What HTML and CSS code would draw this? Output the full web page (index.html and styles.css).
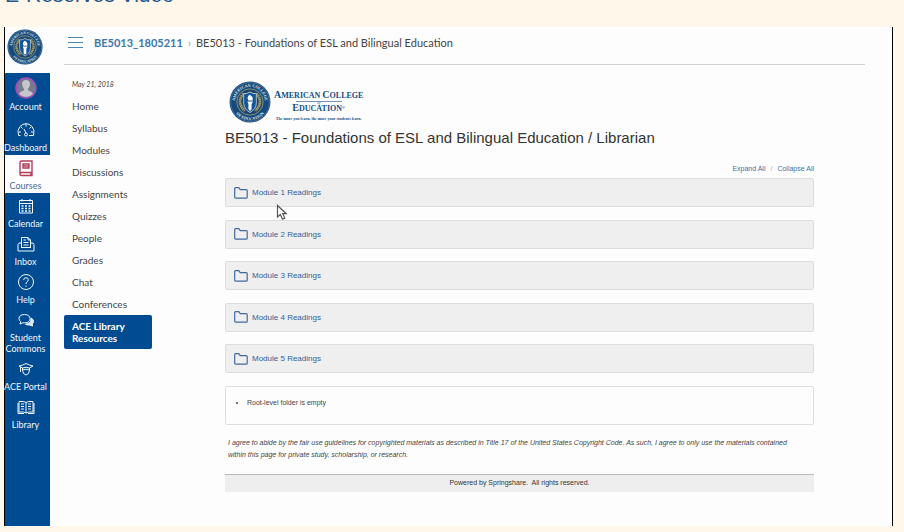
FILE: index.html
```html
<!DOCTYPE html>
<html lang="en">
<head>
<meta charset="utf-8">
<title>E-Reserves Video</title>
<link rel="stylesheet" href="styles.css">
</head>
<body>
<svg class="defs" aria-hidden="true">
  <symbol id="seal" viewBox="0 0 80 80">
    <circle cx="40" cy="40" r="39" fill="#174a7c"/>
    <circle cx="40" cy="40" r="37" fill="none" stroke="#6d8fae" stroke-width="1"/>
    <circle cx="40" cy="40" r="25" fill="#20456a" stroke="#9aa98a" stroke-width="1.5"/>
    <path id="arc-top" d="M12 45A28.500 28.500 0 1 1 68 45" fill="none"/>
    <path id="arc-bottom" d="M6 46A34.500 34.500 0 0 0 74 46" fill="none"/>
    <text class="seal-text"><textPath href="#arc-top" startOffset="50%">AMERICAN COLLEGE</textPath></text>
    <text class="seal-text"><textPath href="#arc-bottom" startOffset="50%">OF EDUCATION</textPath></text>
    <path d="M28 24Q13 40 30 57M52 24Q67 40 50 57" fill="none" stroke="#a6a067" stroke-width="5" stroke-dasharray="3 1"/>
    <path d="M28 24Q34 25 40 21Q46 25 52 24V43Q51 54 40 60Q29 54 28 43Z" fill="#0d559c" stroke="#d7dfd9" stroke-width="1.500"/>
    <path d="M39 26Q47 29 45 37H37Q33 31 39 26ZM35 39H46L43 44V54L40 57L37 54V44Z" fill="#fff"/>
  </symbol>
  <symbol id="folder" viewBox="0 0 14 12">
    <path d="M.7 10V1.500Q.7.700 1.500.700H4.800L6.200 2.700H12.300Q13.200 2.700 13.200 3.600V10.200Q13.200 11.200 12.200 11.200H1.800Q.7 11.200.7 10Z" fill="none" stroke="#416a9d" stroke-width="1.200"/>
  </symbol>
</svg>

<h1 class="page-title">E-Reserves Video</h1>

<main class="frame">
  <nav class="rail" aria-label="Global">
    <a class="rail-logo" href="#" aria-label="American College of Education"><svg><use href="#seal"/></svg></a>
    <a class="rail-item account" href="#">
      <svg viewBox="0 0 22 22"><circle cx="11" cy="11" r="10" fill="#737b8c" stroke="#a94bbd" stroke-width="1.500"/><path d="M4 17Q5 14 9 13.500V12Q6.500 9 7 6Q8 3 11 3T15 6Q15.500 9 13 12V13.500Q17 14 18 17Q15 20 11 20T4 17Z" fill="#c6c5c9" stroke="none"/></svg>
      <span>Account</span></a>
    <a class="rail-item" href="#">
      <svg viewBox="0 0 18 18"><path d="M3.500 14.500H1.500Q-.2 9 3 5.500Q6 2.500 9 2.700Q12 2.500 15 5.500Q18.200 9 16.500 14.500H12M9 3V5.500M4 6L5.500 7.500M14 6L12.500 7.500M2 11H4M14 11H16M7 8L9 12"/><circle cx="9" cy="13.500" r="1.500"/></svg>
      <span>Dashboard</span></a>
    <a class="rail-item current" href="#" aria-current="page">
      <svg viewBox="0 0 18 18"><path d="M15 13.500H4.500Q3 13.500 3 15T4.500 16.500H15V2H4.500Q3 2 3 3.500V15M6 5H12V9H6ZM6 7H12M14 14V16" stroke-width="1.400"/></svg>
      <span>Courses</span></a>
    <a class="rail-item" href="#">
      <svg viewBox="0 0 18 18"><path d="M2.500 3.500H15.500V16H2.500ZM2.500 6.500H15.500M5 2V4.500M13 2V4.500"/><path d="M4.500 9H13.500M4.500 11.500H13.500M4.500 14H13.500" stroke-width="1.600" stroke-dasharray="2 1.500"/></svg>
      <span>Calendar</span></a>
    <a class="rail-item" href="#">
      <svg viewBox="0 0 18 18"><path d="M4.500 12.500V2.500H11L13.500 5V12.500M11 2.500V5H13.500M6.500 5H9M6.500 7.500H11.500M6.500 10H11.500M4.500 8H2L1 9.500V16H17V9.500L16 8H13.500M4 12.500H14"/></svg>
      <span>Inbox</span></a>
    <a class="rail-item" href="#">
      <svg viewBox="0 0 18 18"><circle cx="9" cy="9" r="7.500"/><path d="M6.700 7Q6.700 4.700 9 4.700T11.300 6.800Q11.300 8 9.800 9Q9 9.600 9 11M9 12.500V13.700"/></svg>
      <span>Help</span></a>
    <a class="rail-item" href="#">
      <svg viewBox="0 0 18 18"><path d="M7.500 3.500C3.800 3.500 2 5.300 2 7.700Q2 9.500 3.700 10.700L3 13L6 11.800C10.500 12.300 13 10.300 13 7.700S11 3.500 7.500 3.500Z"/><path d="M14 7Q16.500 8 16.500 10.500Q16.500 12 15 13L15.700 15L12.700 14Q10 14.200 8.500 13.200Q13.500 12.500 14 9Z" fill="#d8e6f2"/></svg>
      <span>Student Commons</span></a>
    <a class="rail-item" href="#">
      <svg viewBox="0 0 18 18"><path d="M2 6Q5 5.500 9 3.500Q13 5.500 16 6L12.500 8Q9 6.500 5.500 8ZM5.500 8V10.500Q6 14.500 9 15Q12 14.500 12.500 10.500V8M5.500 10Q9 8.500 12.500 10M3.500 7V12"/></svg>
      <span>ACE Portal</span></a>
    <a class="rail-item" href="#">
      <svg viewBox="0 0 18 18"><path d="M9 4.500Q7 3 2 3.500V14Q7 13.500 9 15Q11 13.500 16 14V3.500Q11 3 9 4.500ZM9 4.500V15M4 6H7M4 8.500H7M4 11H7M11 6H14M11 8.500H14M11 11H14M1 5V15.500H7M17 5V15.500H11"/></svg>
      <span>Library</span></a>
  </nav>

  <div class="app">
    <header class="crumbs">
      <button class="menu" type="button" aria-label="Toggle course menu"><i></i><i></i><i></i></button>
      <a class="crumb-link" href="#">BE5013_1805211</a>
      <span class="crumb-sep">›</span>
      <span>BE5013 - Foundations of ESL and Bilingual Education</span>
    </header>

    <div class="columns">
      <nav class="course-nav" aria-label="Course">
        <p class="term">May 21, 2018</p>
        <a href="#">Home</a>
        <a href="#">Syllabus</a>
        <a href="#">Modules</a>
        <a href="#">Discussions</a>
        <a href="#">Assignments</a>
        <a href="#">Quizzes</a>
        <a href="#">People</a>
        <a href="#">Grades</a>
        <a href="#">Chat</a>
        <a href="#">Conferences</a>
        <a class="active" href="#" aria-current="page">ACE Library Resources</a>
      </nav>

      <section class="content">
        <div class="brand">
          <svg class="brand-seal" aria-hidden="true"><use href="#seal"/></svg>
          <div class="brand-words">
            <span class="brand-line"><b>A</b>MERICAN <b>C</b>OLLEGE</span>
            <span class="brand-of">of</span>
            <span class="brand-line"><b>E</b>DUCATION<small>®</small></span>
            <span class="brand-motto">The more you learn, the more your students learn.</span>
          </div>
        </div>
        <h2>BE5013 - Foundations of ESL and Bilingual Education / Librarian</h2>
        <div class="toggles"><a href="#">Expand All</a><span>/</span><a href="#">Collapse All</a></div>
        <div class="modules">
          <a class="module" href="#"><svg><use href="#folder"/></svg>Module 1 Readings
            <svg class="pointer" viewBox="0 0 12 17"><path d="M1.500 1.500V13L4.300 10.500L6.500 15.200L8.800 14.100L6.700 9.700H10.200Z" fill="#fff" stroke="#555" stroke-width="1.200"/></svg></a>
          <a class="module" href="#"><svg><use href="#folder"/></svg>Module 2 Readings</a>
          <a class="module" href="#"><svg><use href="#folder"/></svg>Module 3 Readings</a>
          <a class="module" href="#"><svg><use href="#folder"/></svg>Module 4 Readings</a>
          <a class="module" href="#"><svg><use href="#folder"/></svg>Module 5 Readings</a>
        </div>
        <ul class="root-files"><li>Root-level folder is empty</li></ul>
        <p class="agreement">I agree to abide by the fair use guidelines for copyrighted materials as described in Title 17 of the United States Copyright Code. As such, I agree to only use the materials contained within this page for private study, scholarship, or research.</p>
        <footer>Powered by Springshare.&nbsp; All rights reserved.</footer>
      </section>
    </div>
  </div>
</main>
</body>
</html>
```
FILE: styles.css
```css
* { box-sizing: border-box; }

body {
  margin: 0;
  background: #fff7e9;
  font-family: "Liberation Sans", sans-serif;
  color: #444;
  overflow: hidden;
}

a { color: inherit; text-decoration: none; }

.defs { position: absolute; width: 0; height: 0; }

.seal-text {
  fill: #dfe8ee;
  font: 700 8px "Liberation Serif", serif;
  text-anchor: middle;
}

.page-title {
  margin: -19px 0 0 5px;
  padding-bottom: 18px;
  font-size: 21px;
  font-weight: 400;
  line-height: 28px;
  color: #22558b;
}

.frame {
  display: flex;
  margin: 0 11px 6px 4px;
  border: solid #000;
  border-width: 0 1px;
  background: #fdfdfe;
  font-family: Lato, sans-serif;
}

.rail {
  flex: none;
  width: 45px;
  padding-bottom: 94px;
  background: #004b91;
}

.rail-logo {
  display: block;
  height: 46px;
  padding: 2px;
  background: #fdfdfe;
}

.rail-logo svg { display: block; width: 36px; height: 36px; }

.rail-item {
  display: flex;
  flex-direction: column;
  align-items: center;
  gap: 3px;
  padding: 4px 4px 2px 0;
  color: #f2f7fb;
  font-size: 9px;
  line-height: 11px;
  text-align: center;
}

.rail-item svg {
  width: 18px;
  height: 18px;
  fill: none;
  stroke: currentColor;
  stroke-width: 1;
}

.rail-item span { margin: 0 -2px; }

.rail-item.account { gap: 2px; padding-bottom: 5px; }

.account svg { width: 22px; height: 22px; }

.rail-item.current {
  background: #fdfdfe;
  color: #4a6a94;
}

.rail-item.current svg { stroke: #b23f5c; }

.app { flex: 1; min-width: 0; padding: 0 27px 0 14px; }

.crumbs {
  display: flex;
  align-items: center;
  height: 38px;
  padding-bottom: 6px;
  border-bottom: 1px solid #cdd1d4;
  font-size: 11px;
  line-height: 16px;
}

.menu {
  display: grid;
  gap: 4px;
  width: 15px;
  margin: 0 11px 0 4px;
  padding: 0;
  border: 0;
  background: none;
}

.menu i { height: 1px; background: #4a86b4; }

.crumb-link { color: #3d78a9; font-weight: 700; }

.crumb-sep { margin: 0 5px; color: #999; }

.columns { display: flex; }

.course-nav {
  flex: none;
  width: 88px;
  padding-top: 13px;
  font-size: 10px;
  line-height: 12px;
}

.course-nav a { display: block; padding: 5px 8px; }

.term {
  margin: 0 0 5px;
  padding-left: 8px;
  font-size: 7px;
  font-style: italic;
}

.course-nav .active {
  border-radius: 2px;
  background: #004b91;
  color: #fff;
  font-weight: 700;
}

.content {
  flex: 1;
  min-width: 0;
  padding: 16px 51px 0 73px;
  font-family: "Liberation Sans", sans-serif;
}

.brand { display: flex; gap: 3px; padding-left: 4px; }

.brand-seal { width: 42px; height: 42px; }

.brand-words {
  display: flex;
  flex-direction: column;
  align-items: center;
  padding-top: 9px;
  color: #174f84;
  font-family: "Liberation Serif", serif;
}

.brand-line { font-size: 8px; font-weight: 700; line-height: 10px; }
.brand-line b { font-size: 10px; }
.brand-line small { font-size: 4px; vertical-align: top; }

.brand-of {
  width: 46px;
  height: 2px;
  border-top: 1px solid #7295b5;
  font-size: 4px;
  font-style: italic;
  line-height: 1px;
  text-align: center;
}

.brand-motto { font-size: 4px; font-weight: 700; line-height: 10px; }

h2 {
  margin: 4px 0 0;
  font-size: 15px;
  font-weight: 400;
  line-height: 20px;
  color: #333;
}

.toggles {
  display: flex;
  justify-content: flex-end;
  gap: 5px;
  margin: 16px 0 4px;
  color: #44709e;
  font-size: 7px;
  line-height: 10px;
}

.toggles span { color: #aaa; }

.modules {
  display: flex;
  flex-direction: column;
  justify-content: space-between;
  min-height: 195px;
}

.module {
  position: relative;
  display: flex;
  align-items: center;
  gap: 4px;
  padding: 6px 8px;
  border: 1px solid #dcdddf;
  border-radius: 2px;
  background: #efefef;
  color: #31619a;
  font-size: 8px;
  line-height: 15px;
}

.module svg { width: 14px; height: 12px; }

.module .pointer {
  position: absolute;
  left: 50px;
  top: 25px;
  z-index: 1;
  width: 12px;
  height: 17px;
}

.root-files {
  margin: 13px 0 0;
  padding: 10px 0 15px 21px;
  border: 1px solid #dcdee0;
  border-radius: 2px;
  font-size: 7px;
  line-height: 12px;
}

.agreement {
  margin: 12px 0 13px;
  padding: 0 9px 0 3px;
  font-size: 7px;
  font-style: italic;
  line-height: 12px;
}

footer {
  padding: 2px 0 3px;
  border-top: 1px solid #b9b9b9;
  background: #eee;
  font-size: 7px;
  line-height: 12px;
  text-align: center;
  color: #333;
}
```
